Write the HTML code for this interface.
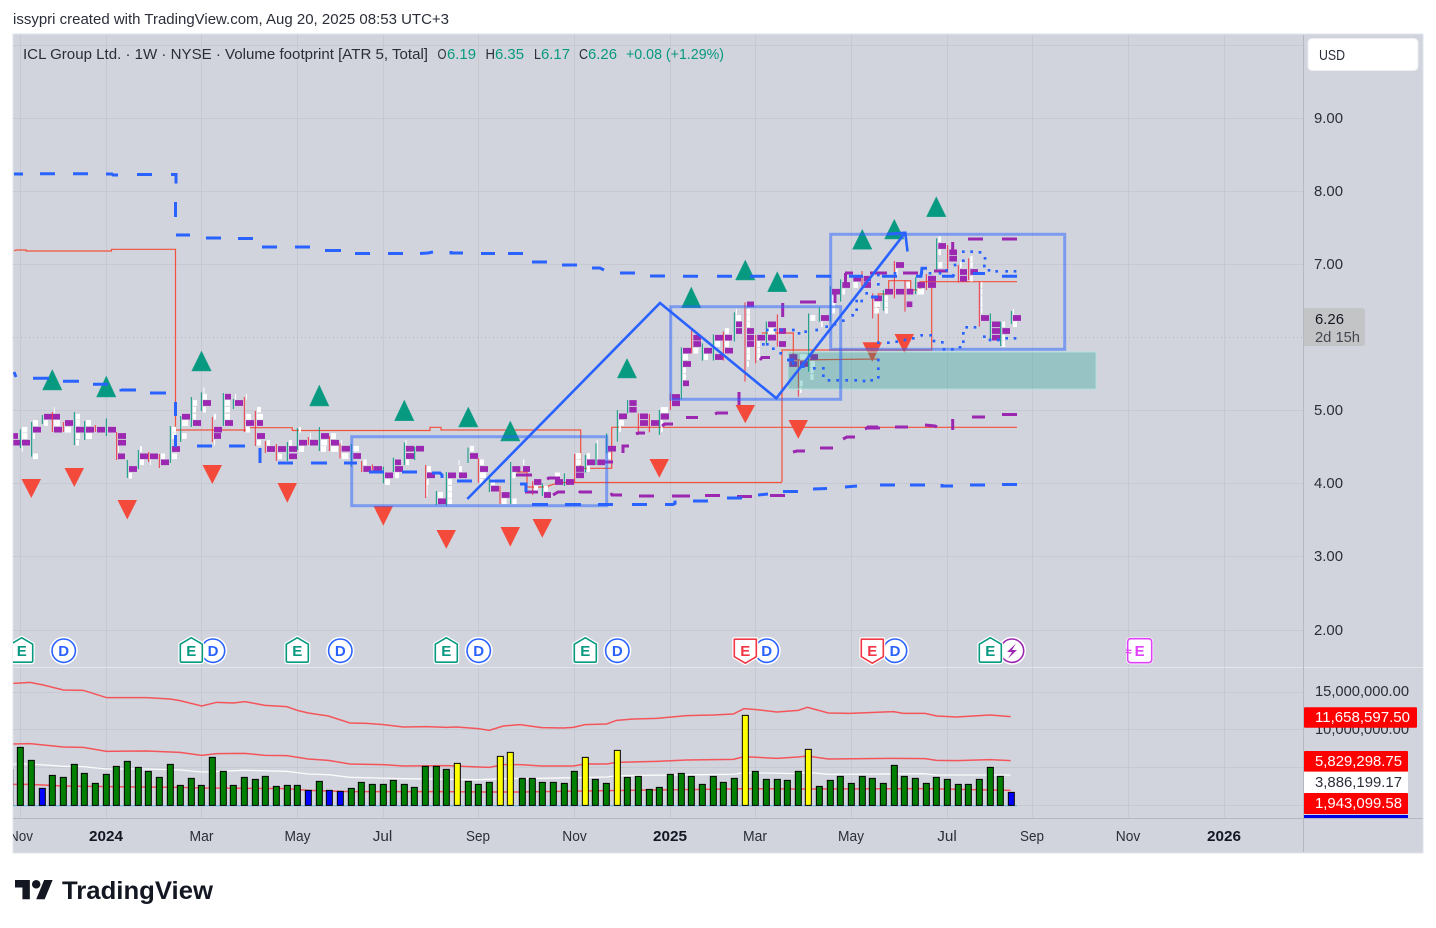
<!DOCTYPE html>
<html>
<head>
<meta charset="utf-8">
<title>ICL Group Ltd. 1W chart</title>
<style>
html,body{margin:0;padding:0;background:#fff;width:1436px;height:928px;overflow:hidden}
svg{display:block}
text{font-family:"Liberation Sans",sans-serif;font-size:15px;fill:#2a2e39}
.t{fill:#089981}
.w{fill:#fff}
</style>
</head>
<body>
<svg width="1436" height="928" viewBox="0 0 1436 928" xmlns="http://www.w3.org/2000/svg">
<defs>
<clipPath id="cm"><rect x="13" y="35" width="1290" height="632"/></clipPath>
<clipPath id="cl"><rect x="13" y="668" width="1290" height="150"/></clipPath>
<clipPath id="ct"><rect x="13" y="820" width="1290" height="32"/></clipPath>
<path id="eu" d="M-11 -6.5 L0 -13 L11 -6.5 V10 Q11 11.5 9.5 11.5 H-9.5 Q-11 11.5 -11 10Z"/>
<path id="ed" d="M-11 -11.5 H11 V6 L0 12.5 L-11 6Z"/>
</defs>

<text x="13" y="24" textLength="436" lengthAdjust="spacingAndGlyphs">issypri created with TradingView.com, Aug 20, 2025 08:53 UTC+3</text>

<rect x="13" y="34" width="1410" height="819" fill="#d1d4dc" stroke="#e0e3eb" stroke-width="1"/>

<!-- grid -->
<path stroke="#c6c9d2" stroke-width="1" fill="none" d="M13 45.5H1303M13 118.5H1303M13 191.5H1303M13 264.5H1303M13 410.5H1303M13 483.5H1303M13 556.5H1303M13 630.5H1303M13 692.5H1303M13 729.5H1303M13 767.5H1303M13 805.5H1303M20.5 35V818M106.5 35V818M201.5 35V818M297.5 35V818M383.5 35V818M478.5 35V818M574.5 35V818M670.5 35V818M755.5 35V818M851.5 35V818M947.5 35V818M1032.5 35V818M1128.5 35V818M1224.5 35V818"/>
<path d="M13 337.5H1303" stroke="#b4b8c2" stroke-width="1" stroke-dasharray="1 3" fill="none"/>
<path stroke="#e4e6ec" stroke-width="1" fill="none" d="M13 667.5H1423"/>
<path stroke="#b4b8c2" stroke-width="1" fill="none" d="M1303.5 35V852M13 818.5H1423"/>

<g clip-path="url(#cm)">
<!-- red behind -->
<g fill="none" stroke="#f4503c" stroke-width="1.2">
<path d="M14 251L16 250H26V251H111.5V249.3H175.5V430H249.3V427.7H292.3V430.5H430V427.3H441V430H580.7V468.3H611.7V427.3H1017"/>
<path d="M516.7 472H527V487H548V486L556.7 483.3V482.5H782"/>
<path d="M782 482V350H931.7V281.7H1017"/>
<path d="M878.3 343V294H888.7V280.7H910.7V290H920V281.7H932"/>
<path d="M761.7 333H793.3V360L878.3 359"/>
</g>
<!-- candles zone 3 -->
<g transform="translate(0,360) scale(.33333)" fill="none">
<path stroke="#fff" stroke-width="17" d="M66 209h16M66 228h16M99 189h15M99 228h6M99 289h15M132 189h12M162 189h18M195 209h18M228 170h12M228 189h12M228 228h12M228 248h9M258 189h15M258 228h18M354 267h3M387 347h9M420 307h12M420 267h6M450 307h3M483 289h12M516 289h15M516 209h12M516 228h12M546 189h18M546 228h14M579 129h12M579 149h9M579 170h9M609 110h12M609 149h9M642 170h6M642 248h3M675 129h15M675 149h15M675 170h15M705 110h3M738 170h15M738 209h12M738 110h3M771 170h18M771 149h12M771 248h12M801 248h9M834 289h12M867 248h9M897 267h15M897 209h6M930 228h3M963 248h18M963 267h15M993 228h15M993 267h21"/>
<path stroke="#fff" stroke-width="3" d="M163 142V160M612 82V100M67 250V275"/>
<path stroke="#9c27b0" stroke-width="17" d="M40 228h14M40 248h22M66 248h24M99 209h24M132 170h24M162 209h24M156 170h24M195 189h24M228 209h24M258 209h24M291 209h24M324 209h24M354 228h24M354 248h24M354 289h21M387 327h24M420 289h24M450 289h24M483 307h24M516 267h24M546 170h24M579 189h24M609 129h24M642 209h24M642 228h21M675 110h18M675 189h24M705 129h24M738 189h24M771 189h18M771 228h24M801 267h24M834 267h24M867 267h24M867 289h24M897 248h24M930 248h24M963 228h24M993 248h24"/>
<path stroke="#089981" stroke-width="3" d="M61 208V264M95 186V290M127 165V192M223 156V255M254 183V240M319 175V228M382 300V354M415 270V327M511 198V309M542 168V246M574 111V201M604 97V153M670 99V198M700 117V147M862 246V303M892 204V270M958 201V273"/>
<path stroke="#f23645" stroke-width="3" d="M157 156V216M190 186V216M286 195V216M350 216V300M446 276V306M478 282V324M637 171V246M733 111V216M766 153V258M796 243V279M829 252V303M925 231V255M988 228V273"/>
</g>
<!-- candles zone 4 -->
<g transform="translate(340,400) scale(.33333)" fill="none">
<path stroke="#fff" stroke-width="17" d="M5 168h20M40 146h17M70 187h10M135 246h15M165 226h12M198 187h9M261 207h12M261 246h5M294 285h15M324 246h12M324 266h12M324 285h12M324 304h12M357 207h9M390 146h12M420 187h12M420 226h18M420 246h9M453 246h12M485 304h15M517 304h13M517 226h9M549 187h4M582 266h12M612 266h12M645 226h15M708 168h15M708 187h15M741 168h9M741 207h9M804 168h9M837 69h15M837 88h6M963 69h5M963 88h5"/>
<path stroke="#fff" stroke-width="3" d="M5 120V135M198 120V135M261 238V290M357 180V195M772 120V178"/>
<path stroke="#9c27b0" stroke-width="17" d="M5 146h25M40 168h23M70 207h23M100 207h26M135 226h24M165 187h18M165 207h24M198 146h24M198 168h24M228 146h24M261 226h24M294 304h24M324 226h24M357 226h24M390 168h24M420 207h24M453 266h24M485 285h24M517 207h24M549 207h21M582 246h22M612 285h21M645 246h24M678 246h24M708 207h24M708 226h24M741 187h24M772 187h23M804 146h24M837 49h24M868 9h22M868 29h22M900 49h24M900 69h24M933 69h24M963 49h24"/>
<path stroke="#089981" stroke-width="3" d="M34 132V200M130 200V250M160 173V216M193 127V195M224 140V180M289 273V315M319 216V318M384 143V189M448 225V276M512 186V312M607 250V288M673 220V258M736 165V218M768 130V195M800 100V160M832 30V125M863 0V40M958 30V105"/>
<path stroke="#f23645" stroke-width="3" d="M0 130V175M65 183V216M97 193V216M257 195V294M415 175V248M480 258V312M578 243V285M704 162V250M895 40V105M928 42V97"/>
</g>
<!-- candles zone 2 -->
<g transform="translate(660,190) scale(.33333)" fill="none">
<path stroke="#fff" stroke-width="17" d="M2 660h22M69 501h15M69 541h9M69 561h9M100 482h15M132 501h12M165 462h15M195 423h12M195 462h12M228 384h15M228 365h3M261 365h9M261 384h9M261 403h9M261 482h9M261 501h9M261 522h6M292 462h8M292 482h8M292 501h8M324 423h21M451 384h15M451 522h14M451 541h10M451 561h10M420 501h20M420 580h8M420 600h5M483 403h5M516 325h9M516 343h9M516 362h9M547 305h8M580 285h14M643 343h17M643 362h14M675 325h9M675 343h9M675 362h9M708 246h5M740 285h10M772 305h20M835 148h8M835 187h8M835 225h12M900 225h5M931 206h7M931 225h7M931 266h7M963 285h4M963 305h4M963 325h4M963 343h4M963 362h4M1027 403h8M1027 443h8M1027 462h8M1059 403h12M1059 365h3"/>
<path stroke="#9c27b0" stroke-width="17" d="M2 680h24M36 621h24M36 640h24M69 482h24M69 522h24M69 580h18M100 443h23M100 462h23M132 482h24M165 443h24M165 501h24M195 443h21M195 482h24M228 403h18M228 423h18M261 343h21M261 423h21M261 443h21M261 462h21M292 443h23M324 403h24M324 443h24M357 423h21M357 462h21M388 501h24M388 522h24M420 522h24M451 501h23M483 384h24M516 305h24M547 285h23M580 266h23M611 266h22M611 285h22M643 325h23M675 305h24M708 225h24M708 305h24M740 343h17M740 305h20M772 285h23M804 266h24M804 285h24M835 168h23M868 187h23M868 206h23M900 246h21M900 266h21M931 246h23M963 384h24M996 403h24M996 423h24M996 443h24M1027 423h23M1059 384h24"/>
<path stroke="#089981" stroke-width="3" d="M64 472V628M127 460V512M160 433V512M223 367V455M319 395V460M446 370V545M478 352V395M511 288V395M542 268V335M670 300V362M767 262V312M830 145V245M991 370V450M1022 395V468M1054 363V402"/>
<path stroke="#f23645" stroke-width="3" d="M31 610V660M95 415V490M190 424V512M255 337V575M287 435V520M352 373V470M415 510V620M606 243V290M638 310V385M703 213V325M735 270V365M799 252V300M863 165V240M895 225V278M926 205V270M958 275V410"/>
</g>

<!-- triangles -->
<g fill="#089981" stroke="#2ba594" stroke-width=".5">
<path d="M52.3 369.5L62 390H42.5Z"/><path d="M106.3 376L116 397H96.5Z"/><path d="M201.5 351L211.3 371H191.7Z"/><path d="M319.3 385L329 406H309.5Z"/><path d="M404.3 400L414 420.7H394.5Z"/><path d="M468.3 407L478 427H458.5Z"/><path d="M510.3 421L520 441H500.5Z"/><path d="M627 358.5L636.7 378H617.3Z"/><path d="M691.3 287L701 307.7H681.5Z"/><path d="M745.3 260L755 280H735.5Z"/><path d="M777.3 271.7L787 291.7H767.5Z"/><path d="M862.3 229.3L872 249.3H852.5Z"/><path d="M894.3 219.3L904 239H884.5Z"/><path d="M936.3 196.7L946 216.7H926.5Z"/>
</g>
<g fill="#f44a3c">
<path d="M21.5 479H41L31.3 498Z"/><path d="M64.5 468H84L74.3 487Z"/><path d="M117.5 500H137L127.3 519.5Z"/><path d="M202.5 465H222L212.3 484Z"/><path d="M277.5 483H297L287.3 502.7Z"/><path d="M373.5 506H393L383.3 525.7Z"/><path d="M436.5 530H456L446.3 548.7Z"/><path d="M500.5 527H520L510.3 546.7Z"/><path d="M532.5 519H552L542.3 537.7Z"/><path d="M649.5 459H669L659.3 477.7Z"/><path d="M735.5 405H755L745.3 423.3Z"/><path d="M788.5 420H808L798.3 438.7Z"/><path d="M862.5 342.3H882L872.3 361.7Z"/><path d="M894.5 334H914L904.3 353.3Z"/>
</g>

<!-- teal zone -->
<rect x="788" y="352" width="308" height="37" fill="#009688" fill-opacity=".28" stroke="#b2dfdb" stroke-width="1"/>

<!-- purple dashed -->
<g fill="none" stroke="#9c27b0" stroke-width="3">
<path d="M800 302h16M782.7 303V317M760 360l2 -2.5h8M845 273h8M845.5 273v13M870 273h17M903 273h15M934 271h14M968 239h15M1002 239h15M835 290v13M952.7 242v9"/>
<path d="M739 392v13M686 417.5h12M715 414l2 -1h11M662 426l3 -2h7M867 428l1 -1h10M895 427h13M925 425l10 1 2 1M952.7 419v11M972 417h13M1002 414.5h15"/>
<path d="M516 475h16M547 479l2 -1h11M525 492h13M553 495l5 -3h7M579 491l1 1h12M611 493l1 2h10M639 496h15M672 496h18M705 495.5h15M737 496.5h15M770 495.5h15M603 462h10M629 446h-6v7M636 434l2 -1h7M663 425l2 -1h8"/>
<path d="M793 452l4 -1h8M820 448h13M843 439l4 -2h8M865 429l2 -1h13"/>
</g>

<!-- blue dashed -->
<g fill="none" stroke="#2962ff" stroke-width="3">
<path d="M14 174h9M40 173.7h15M73 173.7h15M106 174h6l1 1h5M137 174.5h15M171 174.5h5v9M175.5 202v15M176 235h14M206 238h15M238 238.5h15M262 247h15M295 247h15M325 250.5h16M355 253.5h15M388 253.5h15M420 253.5l8 -.5 5 -1M451 251v2h12M481 253.5h14M508 253.5h15M532 262h15M562 265h15M592 268h8l4 2M620 273h15M650 276h15M683 276.3h15M717 276.3h15M750 276.3h15M783 276.3h15M816 276.3h15M849 276.3h14M882 276.3h15M916 276.3h5l1 -8h5M942 276.3h11l1 -2M973 273.5h12M1002 276.3h15"/>
<path d="M14 372l2 5M33 378.3h16M63 381.3h16M93 384.3h15M121 389v1h15M150 393h16M175.5 402v14M175.5 435v12M197 446h15M229 446h16M260 448v15M278 463h15M311 463h16M344 463h13M369 472h15M402 472h15M432 473h8l2 2v3M457 481h15M490 481h15M520 484h6v8M532 504.5h16M565 504.5h16M598 504.5h15M632 504.5h15M665 504.5h8l2 -1v-3M693 501h15M727 498h15M758 495l10 -1M783 491.5h15M813 489l14 -.5M845 487l12 -1M880 485h15M910 485h15M942 484v2h11M970 485h15M1002 484.5h15"/>
<path d="M871 297h7M788 360h6"/>
</g>

<!-- blue dots -->
<g transform="translate(660,190) scale(.33333)" fill="none" stroke="#2962ff" stroke-width="8" stroke-linecap="square">
<path d="M620 310h.1M605 333h.1M590 333h.1M590 359h.1M578 376h.1M550 392h.1M525 403h.1M500 410h.1M470 420h.1M437 425h.1M417 430h.1M400 420h.1M365 420h.1M345 420h.1M322 420h.1M310 463h.1M322 463h.1M340 476h.1M362 490h.1M385 510h.1M400 520h.1M430 530h.1M463 535h.1M490 535h.1M490 557h.1M507 571h.1M533 571h.1M560 571h.1M587 571h.1M612 573h.1M635 571h.1M655 562h.1M655 536h.1M655 510h.1M655 458h.1M685 458h.1M710 455h.1M735 450h.1M760 445h.1M785 436h.1M812 436h.1M822 453h.1M847 457h.1M852 478h.1M877 478h.1M900 472h.1M910 455h.1M910 430h.1M920 412h.1M945 412h.1M973 440h.1M990 450h.1M1015 450h.1M1040 445h.1M1065 445h.1M910 185h.1M935 185h.1M960 187h.1M975 205h.1M973 228h.1M987 241h.1M1010 244h.1M1040 244h.1M1065 244h.1M910 212h.1M885 225h.1M860 241h.1M840 250h.1M810 250h.1M785 250h.1M705 250h.1M655 255h.1M655 283h.1"/>
</g>

<!-- rectangles -->
<g fill="none" stroke="#2962ff" stroke-opacity=".5" stroke-width="3">
<rect x="351.7" y="436.7" width="255" height="69"/>
<rect x="670.7" y="306.7" width="170" height="92.6"/>
<rect x="830.7" y="234.3" width="234" height="115"/>
</g>
<!-- trend lines -->
<g fill="none" stroke="#2962ff" stroke-width="2.6">
<path d="M467.3 499L660 303L776.3 398.3L905.3 232.7"/>
<path d="M887 234L905.3 232.7L907.5 251.5"/>
</g>

<!-- D markers -->
<g fill="#fff" stroke="#fff" stroke-width="1">
<circle cx="63.7" cy="650.7" r="13.5"/><circle cx="213" cy="650.7" r="13.5"/><circle cx="340.3" cy="650.7" r="13.5"/><circle cx="478.7" cy="650.7" r="13.5"/><circle cx="617.3" cy="650.7" r="13.5"/><circle cx="766.7" cy="650.7" r="13.5"/><circle cx="895" cy="650.7" r="13.5"/><circle cx="1012" cy="650.7" r="13.5"/>
</g>
<g fill="none" stroke="#2962ff" stroke-width="1.6">
<circle cx="63.7" cy="650.7" r="11.7"/><circle cx="213" cy="650.7" r="11.7"/><circle cx="340.3" cy="650.7" r="11.7"/><circle cx="478.7" cy="650.7" r="11.7"/><circle cx="617.3" cy="650.7" r="11.7"/><circle cx="766.7" cy="650.7" r="11.7"/><circle cx="895" cy="650.7" r="11.7"/>
</g>
<circle cx="1012" cy="650.7" r="11.7" fill="none" stroke="#9c27b0" stroke-width="1.6"/>
<path d="M1016 643.5L1007 652H1012L1008 658.5L1017 650H1012Z" fill="#9c27b0"/>
<g text-anchor="middle">
<text x="63.7" y="656" style="fill:#2962ff;font-weight:700;font-size:15px">D</text>
<text x="213" y="656" style="fill:#2962ff;font-weight:700;font-size:15px">D</text>
<text x="340.3" y="656" style="fill:#2962ff;font-weight:700;font-size:15px">D</text>
<text x="478.7" y="656" style="fill:#2962ff;font-weight:700;font-size:15px">D</text>
<text x="617.3" y="656" style="fill:#2962ff;font-weight:700;font-size:15px">D</text>
<text x="766.7" y="656" style="fill:#2962ff;font-weight:700;font-size:15px">D</text>
<text x="895" y="656" style="fill:#2962ff;font-weight:700;font-size:15px">D</text>
</g>
<!-- E markers -->
<g fill="#fff" stroke="#fff" stroke-width="4" stroke-linejoin="round">
<use href="#eu" x="21.7" y="650.7"/><use href="#eu" x="191.3" y="650.7"/><use href="#eu" x="297.3" y="650.7"/><use href="#eu" x="446.3" y="650.7"/><use href="#eu" x="585.3" y="650.7"/><use href="#eu" x="990.3" y="650.7"/><use href="#ed" x="745.3" y="650.7"/><use href="#ed" x="872.3" y="650.7"/>
</g>
<g fill="#fff" stroke="#089981" stroke-width="1.6" stroke-linejoin="round">
<use href="#eu" x="21.7" y="650.7"/><use href="#eu" x="191.3" y="650.7"/><use href="#eu" x="297.3" y="650.7"/><use href="#eu" x="446.3" y="650.7"/><use href="#eu" x="585.3" y="650.7"/><use href="#eu" x="990.3" y="650.7"/>
</g>
<g fill="#fff" stroke="#f23645" stroke-width="1.6" stroke-linejoin="round">
<use href="#ed" x="745.3" y="650.7"/><use href="#ed" x="872.3" y="650.7"/>
</g>
<g text-anchor="middle">
<text x="21.7" y="656" style="fill:#089981;font-weight:700;font-size:15px">E</text>
<text x="191.3" y="656" style="fill:#089981;font-weight:700;font-size:15px">E</text>
<text x="297.3" y="656" style="fill:#089981;font-weight:700;font-size:15px">E</text>
<text x="446.3" y="656" style="fill:#089981;font-weight:700;font-size:15px">E</text>
<text x="585.3" y="656" style="fill:#089981;font-weight:700;font-size:15px">E</text>
<text x="990.3" y="656" style="fill:#089981;font-weight:700;font-size:15px">E</text>
<text x="745.3" y="656" style="fill:#f23645;font-weight:700;font-size:15px">E</text>
<text x="872.3" y="656" style="fill:#f23645;font-weight:700;font-size:15px">E</text>
</g>
<rect x="1127.7" y="638.7" width="24" height="24" rx="3" fill="#fff" stroke="#fff" stroke-width="3"/>
<rect x="1127.7" y="638.7" width="24" height="24" rx="3" fill="#fff" stroke="#e040fb" stroke-width="1.6"/>
<text x="1139.6" y="656" text-anchor="middle" style="fill:#e040fb;font-weight:700;font-size:15px">E</text>
<text x="1128.5" y="655" text-anchor="middle" style="fill:#e040fb;font-weight:700;font-size:11px">≈</text>
</g>

<!-- lower pane -->
<g clip-path="url(#cl)">
<path d="M13 805.7H1017" stroke="#6db5dc" stroke-width="1.2" fill="none"/>
<g transform="translate(0,630) scale(.33333)" fill="none">
<path stroke="#f4555a" stroke-width="4.5" d="M40 160L90 157L130 165L190 180L250 181L320 203L390 203L440 203L510 207L540 212L605 228L650 217L700 219L735 215L795 226L860 230L895 242L925 249L985 258L1050 279L1100 280L1150 284L1210 291L1280 290L1340 292L1370 291L1435 296L1468 301L1510 288L1560 284"/>
<path stroke="#f4555a" stroke-width="4.5" d="M40 342L90 341L190 351L250 352L320 364L440 363L540 367L605 376L650 371L735 370L795 376L860 377L925 387L985 391L1050 402L1150 404L1210 408L1340 407L1435 411L1468 412L1510 404L1560 404"/>
<path stroke="#fff" stroke-width="4" stroke-opacity=".9" d="M40 402L90 402L190 409L250 410L320 417L440 417L540 420L605 426L735 421L860 424L925 432L985 434L1050 442L1210 446L1435 449L1560 445"/>
<path stroke="#f4555a" stroke-width="4.5" d="M40 463L90 463L190 468L320 470L540 472L605 474L860 476L925 481L1050 485L1310 485L1468 486L1560 486"/>
</g>
<g transform="translate(520,630) scale(.33333)" fill="none">
<path stroke="#f4555a" stroke-width="4.5" d="M0 284L65 293L130 294L160 292L195 284L260 282L290 271L340 267L410 265L500 257L580 255L640 252L672 236L710 239L770 246L835 241L862 232L925 249L990 250L1120 245L1150 250L1215 250L1250 258L1310 261L1410 255L1472 260"/>
<path stroke="#f4555a" stroke-width="4.5" d="M0 404L65 408L160 408L195 402L260 402L290 397L410 394L500 390L640 388L672 380L770 385L835 381L862 378L925 387L1120 385L1215 386L1250 391L1310 392L1410 389L1472 392"/>
<path stroke="#fff" stroke-width="4" stroke-opacity=".9" d="M0 446L160 443L260 441L290 437L640 433L672 428L835 431L862 427L925 433L1210 431L1250 435L1472 435"/>
<path stroke="#f4555a" stroke-width="4.5" d="M0 486L260 482L640 477L672 476L835 477L1215 476L1472 481"/>
</g>
<path d="M13 769V806" stroke="#7d8088" stroke-width="1" fill="none"/>
<!-- volume bars -->
<g transform="translate(0,630) scale(.33333)" stroke="#000" stroke-width="3">
<path fill="#008000" d="M52 526V352h18V526zM85 526V391h18V526zM148 526V436h18V526zM181 526V442h18V526zM214 526V403h18V526zM244 526V430h18V526zM277 526V460h18V526zM310 526V433h18V526zM340 526V409h18V526zM373 526V394h18V526zM406 526V412h18V526zM436 526V424h18V526zM469 526V442h18V526zM502 526V403h18V526zM532 526V466h18V526zM565 526V445h18V526zM595 526V466h18V526zM628 526V382h18V526zM661 526V424h18V526zM691 526V466h18V526zM724 526V442h18V526zM757 526V448h18V526zM787 526V439h18V526zM820 526V469h18V526zM853 526V466h18V526zM883 526V466h18V526zM949 526V454h18V526zM1045 526V475h18V526zM1075 526V457h18V526zM1108 526V463h18V526zM1141 526V463h18V526zM1171 526V451h18V526zM1204 526V463h18V526zM1234 526V472h18V526zM1267 526V409h18V526zM1300 526V409h18V526zM1330 526V418h18V526zM1396 526V454h18V526zM1426 526V463h18V526zM1459 526V457h18V526z"/>
<path fill="#0000ff" d="M118 526V475h18V526zM916 526V481h18V526zM979 526V481h18V526zM1012 526V484h18V526z"/>
<path fill="#ffff00" d="M1363 526V400h18V526zM1492 526V379h18V526zM1522 526V367h18V526z"/>
</g>
<g transform="translate(520,630) scale(.33333)" stroke="#000" stroke-width="3">
<path fill="#008000" d="M-2 526V445h18V526zM28 526V445h18V526zM58 526V457h18V526zM91 526V457h18V526zM124 526V460h18V526zM154 526V424h18V526zM217 526V448h18V526zM250 526V460h18V526zM313 526V442h18V526zM346 526V439h18V526zM379 526V478h18V526zM409 526V472h18V526zM442 526V433h18V526zM475 526V430h18V526zM505 526V439h18V526zM538 526V463h18V526zM571 526V439h18V526zM601 526V457h18V526zM634 526V445h18V526zM697 526V424h18V526zM730 526V448h18V526zM763 526V448h18V526zM793 526V451h18V526zM826 526V424h18V526zM889 526V469h18V526zM922 526V451h18V526zM952 526V439h18V526zM985 526V460h18V526zM1018 526V439h18V526zM1048 526V445h18V526zM1081 526V460h18V526zM1114 526V406h18V526zM1144 526V439h18V526zM1177 526V445h18V526zM1210 526V460h18V526zM1240 526V442h18V526zM1273 526V448h18V526zM1306 526V463h18V526zM1336 526V463h18V526zM1369 526V448h18V526zM1402 526V412h18V526zM1432 526V439h18V526z"/>
<path fill="#ffff00" d="M187 526V382h18V526zM283 526V361h18V526zM667 526V256h18V526zM856 526V358h18V526z"/>
<path fill="#0000ff" d="M1465 526V487h18V526z"/>
</g>
</g>

<!-- legend -->
<text x="23" y="59" textLength="405" lengthAdjust="spacingAndGlyphs">ICL Group Ltd. · 1W · NYSE · Volume footprint [ATR 5, Total]</text>
<text x="437.5" y="59" textLength="9" lengthAdjust="spacingAndGlyphs">O</text>
<text x="447" y="59" class="t" textLength="29" lengthAdjust="spacingAndGlyphs">6.19</text>
<text x="485.5" y="59" textLength="9.5" lengthAdjust="spacingAndGlyphs">H</text>
<text x="495" y="59" class="t" textLength="29" lengthAdjust="spacingAndGlyphs">6.35</text>
<text x="534" y="59" textLength="7" lengthAdjust="spacingAndGlyphs">L</text>
<text x="541" y="59" class="t" textLength="29" lengthAdjust="spacingAndGlyphs">6.17</text>
<text x="579" y="59" textLength="9" lengthAdjust="spacingAndGlyphs">C</text>
<text x="588" y="59" class="t" textLength="29" lengthAdjust="spacingAndGlyphs">6.26</text>
<text x="626" y="59" class="t" textLength="98" lengthAdjust="spacingAndGlyphs">+0.08 (+1.29%)</text>

<!-- USD -->
<rect x="1308" y="38.5" width="110" height="32" rx="4" fill="#fff" stroke="#eceef2"/>
<text x="1319" y="60" textLength="26" lengthAdjust="spacingAndGlyphs">USD</text>

<!-- price axis -->
<text x="1314" y="123" textLength="29" lengthAdjust="spacingAndGlyphs">9.00</text>
<text x="1314" y="196" textLength="29" lengthAdjust="spacingAndGlyphs">8.00</text>
<text x="1314" y="269" textLength="29" lengthAdjust="spacingAndGlyphs">7.00</text>
<text x="1314" y="415" textLength="29" lengthAdjust="spacingAndGlyphs">5.00</text>
<text x="1314" y="488" textLength="29" lengthAdjust="spacingAndGlyphs">4.00</text>
<text x="1314" y="561" textLength="29" lengthAdjust="spacingAndGlyphs">3.00</text>
<text x="1314" y="635" textLength="29" lengthAdjust="spacingAndGlyphs">2.00</text>
<path d="M1304 308H1362Q1365 308 1365 311V343Q1365 346 1362 346H1304Z" fill="#c3c4c6"/>
<text x="1315" y="324" textLength="29" lengthAdjust="spacingAndGlyphs" style="fill:#131722">6.26</text>
<text x="1315" y="342" textLength="45" lengthAdjust="spacingAndGlyphs" style="fill:#434651">2d 15h</text>

<text x="1315" y="696" textLength="94" lengthAdjust="spacingAndGlyphs">15,000,000.00</text>
<text x="1315" y="734" textLength="94" lengthAdjust="spacingAndGlyphs">10,000,000.00</text>
<rect x="1304" y="707.3" width="113" height="20.4" rx="1" fill="#ff0000"/>
<text x="1315" y="722" class="w" textLength="95" lengthAdjust="spacingAndGlyphs">11,658,597.50</text>
<rect x="1304" y="751" width="104" height="20.7" rx="1" fill="#ff0000"/>
<text x="1315" y="766" class="w" textLength="87" lengthAdjust="spacingAndGlyphs">5,829,298.75</text>
<rect x="1304" y="771.7" width="104" height="21.3" fill="#fff"/>
<text x="1315" y="787" textLength="87" lengthAdjust="spacingAndGlyphs">3,886,199.17</text>
<rect x="1304" y="793" width="104" height="21" rx="1" fill="#ff0000"/>
<text x="1315" y="808" class="w" textLength="87" lengthAdjust="spacingAndGlyphs">1,943,099.58</text>
<rect x="1304" y="815" width="104" height="3" fill="#0000e6"/>

<!-- time axis -->
<g clip-path="url(#ct)">
<text x="9" y="841" textLength="24" lengthAdjust="spacingAndGlyphs">Nov</text>
</g>
<g text-anchor="middle">
<text x="106" y="841" textLength="34" lengthAdjust="spacingAndGlyphs" style="font-weight:700;fill:#131722">2024</text>
<text x="201.5" y="841" textLength="24" lengthAdjust="spacingAndGlyphs">Mar</text>
<text x="297.5" y="841" textLength="26" lengthAdjust="spacingAndGlyphs">May</text>
<text x="382.5" y="841" textLength="19.5" lengthAdjust="spacingAndGlyphs">Jul</text>
<text x="478" y="841" textLength="24" lengthAdjust="spacingAndGlyphs">Sep</text>
<text x="574.5" y="841" textLength="24.5" lengthAdjust="spacingAndGlyphs">Nov</text>
<text x="670" y="841" textLength="34" lengthAdjust="spacingAndGlyphs" style="font-weight:700;fill:#131722">2025</text>
<text x="755" y="841" textLength="24" lengthAdjust="spacingAndGlyphs">Mar</text>
<text x="851" y="841" textLength="26" lengthAdjust="spacingAndGlyphs">May</text>
<text x="947" y="841" textLength="19.5" lengthAdjust="spacingAndGlyphs">Jul</text>
<text x="1032" y="841" textLength="24" lengthAdjust="spacingAndGlyphs">Sep</text>
<text x="1128" y="841" textLength="24.5" lengthAdjust="spacingAndGlyphs">Nov</text>
<text x="1224" y="841" textLength="34" lengthAdjust="spacingAndGlyphs" style="font-weight:700;fill:#131722">2026</text>
</g>

<!-- logo -->
<g transform="translate(15,875.7) scale(1.06,1.07)" fill="#131722">
<path d="M14 22H7V11H0V4h14v18zM28 22h-8l7.5-18h8L28 22z"/>
<circle cx="20" cy="8" r="4"/>
</g>
<text x="62" y="899" textLength="151" lengthAdjust="spacingAndGlyphs" style="font-size:25px;font-weight:700;fill:#131722">TradingView</text>
</svg>
</body>
</html>
